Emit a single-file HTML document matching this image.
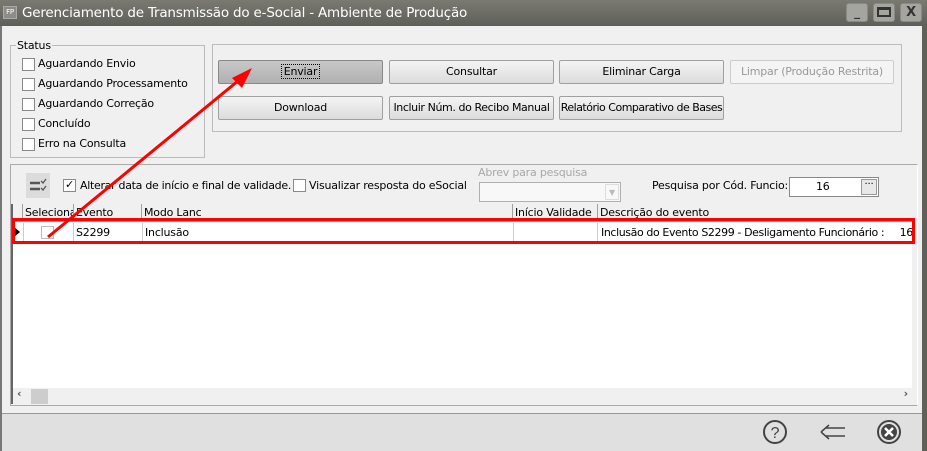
<!DOCTYPE html>
<html><head><meta charset="utf-8"><style>
*{box-sizing:border-box;margin:0;padding:0}
body{width:927px;height:451px;overflow:hidden;background:#f0f0f0;font-family:"DejaVu Sans","Liberation Sans",sans-serif;font-size:11px;color:#000;position:relative;letter-spacing:-0.2px}
.a{position:absolute;white-space:nowrap}
.title{left:0;top:0;width:927px;height:26px;background:linear-gradient(#7a7a72,#5f605a);color:#fff;font-size:13.5px;}
.btn{position:absolute;height:24px;border:1px solid #a0a0a0;border-radius:2px;background:linear-gradient(#f4f4f4,#dcdcdc);text-align:center;line-height:22px;white-space:nowrap;overflow:hidden}
.cb{position:absolute;width:13px;height:13px;border:1px solid #8a8a8a;background:#fff}
.wb{position:absolute;top:3px;width:22px;height:19px;background:#a5a5a0;border:1px solid #8a8a85;border-radius:3px;color:#333;font-weight:bold;text-align:center;font-size:13px;line-height:17px}
.hd{position:absolute;top:0;height:18px;border-right:1px solid #a0a0a0;line-height:18px;padding-left:2px;overflow:hidden;white-space:nowrap}
</style></head><body>
<div class="a title"><div class="a" style="left:3px;top:6px;width:14px;height:13px;background:#8c8c88;border:1px solid #aaa;font-size:7px;line-height:11px;text-align:center;color:#fff">FP</div><span class="a" style="left:22px;top:5px">Gerenciamento de Transmissão do e-Social - Ambiente de Produção</span>
<div class="wb" style="left:846px;font-size:12px">_</div><div class="wb" style="left:873px"><div style="margin:3px auto;width:14px;height:10px;border:2px solid #333;border-top-width:3px"></div></div><div class="wb" style="left:900px">X</div></div>
<div class="a" style="left:922px;top:26px;width:5px;height:425px;background:#5f605a"></div>
<div class="a" style="left:0;top:26px;width:2px;height:425px;background:#777"></div>

<div class="a" style="left:10px;top:45px;width:195px;height:113px;border:1px solid #bcbcbc"></div>
<div class="a" style="left:16px;top:39px;background:#f0f0f0;padding:0 1px">Status</div>
<div class="cb" style="left:22px;top:58px"></div><div class="a" style="left:38px;top:57px">Aguardando Envio</div>
<div class="cb" style="left:22px;top:78px"></div><div class="a" style="left:38px;top:77px">Aguardando Processamento</div>
<div class="cb" style="left:22px;top:98px"></div><div class="a" style="left:38px;top:97px">Aguardando Correção</div>
<div class="cb" style="left:22px;top:118px"></div><div class="a" style="left:38px;top:117px">Concluído</div>
<div class="cb" style="left:22px;top:138px"></div><div class="a" style="left:38px;top:137px">Erro na Consulta</div>

<div class="a" style="left:212px;top:44px;width:690px;height:88px;border:1px solid #bcbcbc"></div>
<div class="btn" style="left:218px;top:60px;width:165px;background:linear-gradient(#c8c8c8,#b0b0b0);border-color:#888"><span style="border:1px dotted #000;padding:0 2px">Enviar</span></div>
<div class="btn" style="left:389px;top:60px;width:165px">Consultar</div>
<div class="btn" style="left:559px;top:60px;width:165px">Eliminar Carga</div>
<div class="btn" style="left:730px;top:60px;width:164px;color:#999;border-color:#ccc;background:#f4f4f4">Limpar (Produção Restrita)</div>
<div class="btn" style="left:218px;top:96px;width:165px">Download</div>
<div class="btn" style="left:389px;top:96px;width:165px;letter-spacing:-0.4px">Incluir Núm. do Recibo Manual</div>
<div class="btn" style="left:559px;top:96px;width:165px;letter-spacing:-0.5px">Relatório Comparativo de Bases</div>

<div class="a" style="left:10px;top:164px;width:908px;height:242px;border:1px solid #aaa;border-right-color:#fff"></div>
<div class="a" style="left:26px;top:173px;width:24px;height:25px;background:#dcdcdc"><svg width="24" height="25"><path d="M4 10h10M4 16h10" stroke="#555" stroke-width="2.5"/><path d="M15 8l2 2 3-4M15 15l2 2 3-4" stroke="#555" stroke-width="1.3" fill="none"/></svg></div>
<div class="cb" style="left:63px;top:179px;font-size:11px;line-height:10px;text-align:center">✓</div><div class="a" style="left:80px;top:179px;letter-spacing:-0.3px">Alterar data de início e final de validade.</div>
<div class="cb" style="left:293px;top:179px"></div><div class="a" style="left:309px;top:179px">Visualizar resposta do eSocial</div>
<div class="a" style="left:478px;top:166px;color:#a8a8a8">Abrev para pesquisa</div>
<div class="a" style="left:479px;top:182px;width:142px;height:20px;border:1px solid #b0b0b0;background:#f8f8f8"><div class="a" style="right:1px;top:1px;width:14px;height:16px;border:1px solid #ddd;color:#bbb;font-size:8px;text-align:center;line-height:16px">▼</div></div>
<div class="a" style="left:652px;top:179px">Pesquisa por Cód. Funcio:</div>
<div class="a" style="left:789px;top:177px;width:90px;height:20px;border:1px solid #888;background:#fff;padding-left:26px;line-height:18px">16<div class="a" style="right:1px;top:1px;width:16px;height:16px;background:#e8e8e8;border:1px solid #999;font-size:10px;line-height:10px;text-align:center">···</div></div>

<div class="a" style="left:11px;top:204px;width:901px;height:184px;background:#fff;border-left:2px solid #666;overflow:hidden">
<div class="a" style="left:0;top:0;width:899px;height:18px;background:#f0f0f0;border-bottom:1px solid #a0a0a0">
<div class="hd" style="left:0;width:10px"></div><div class="hd" style="left:10px;width:51px">Seleciona</div><div class="hd" style="left:61px;width:68px">Evento</div><div class="hd" style="left:129px;width:371px">Modo Lanc</div><div class="hd" style="left:500px;width:85px">Início Validade</div><div class="hd" style="left:585px;width:314px;border:0">Descrição do evento</div></div>
<div class="a" style="left:0;top:19px;width:899px;height:19px;border-bottom:1px solid #ccc;overflow:hidden">
<div class="a" style="left:1px;top:4px;width:0;height:0;border-left:6px solid #000;border-top:5px solid transparent;border-bottom:5px solid transparent"></div>
<div class="a" style="left:10px;top:0;width:51px;height:19px;border-left:1px solid #ccc;border-right:1px solid #ccc"><div class="cb" style="left:17px;top:3px;border-color:#bbb"></div></div>
<div class="a" style="left:63px;top:3px">S2299</div>
<div class="a" style="left:129px;top:0;width:1px;height:19px;background:#ccc"></div><div class="a" style="left:132px;top:3px">Inclusão</div>
<div class="a" style="left:500px;top:0;width:85px;height:19px;border-left:1px solid #ccc;border-right:1px solid #ccc"></div>
<div class="a" style="left:588px;top:3px;white-space:nowrap;letter-spacing:-0.4px">Inclusão do Evento S2299 - Desligamento Funcionário :&nbsp;&nbsp;&nbsp;&nbsp;&nbsp;16 (</div>
</div></div>
<div class="a" style="left:11px;top:388px;width:901px;height:16px;background:#f0f0f0;border-left:2px solid #666"><span class="a" style="left:4px;top:-1px;color:#555;font-weight:bold">‹</span><div class="a" style="left:18px;top:1px;width:17px;height:15px;background:#cdcdcd"></div><span class="a" style="right:4px;top:-1px;color:#555;font-weight:bold">›</span></div>
<div class="a" style="left:12px;top:218px;width:903px;height:26px;border:3px solid #f00"></div>

<div class="a" style="left:2px;top:413px;width:920px;height:38px;background:#e0e0e0;border-top:1px solid #999"></div>
<svg class="a" style="left:760px;top:418px" width="150" height="30"><circle cx="15" cy="14" r="11" fill="none" stroke="#444" stroke-width="2"/><text x="15" y="20" text-anchor="middle" font-family="Liberation Sans" font-size="16" fill="#444">?</text>
<path d="M61 14l8-7M61 14l8 7M66 10h19M66 18h19" stroke="#444" stroke-width="1.5" fill="none"/>
<circle cx="129" cy="14" r="11" fill="none" stroke="#444" stroke-width="2"/><circle cx="129" cy="14" r="8" fill="#444"/><path d="M125 10l8 8M133 10l-8 8" stroke="#fff" stroke-width="2.5"/></svg>

<svg class="a" style="left:0;top:0" width="927" height="451"><path d="M48 237L244 76" stroke="#f00" stroke-width="3"/><path d="M252 68L232 78L242 88Z" fill="#f00"/></svg>
</body></html>
